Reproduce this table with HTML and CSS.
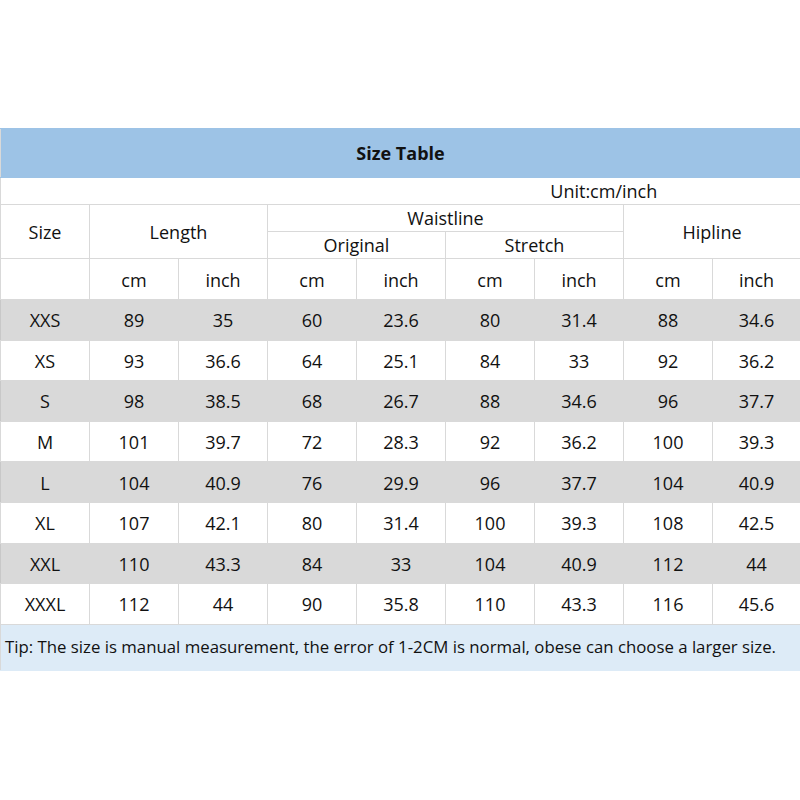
FILE: index.html
```html
<!DOCTYPE html>
<html>
<head>
<meta charset="utf-8">
<link rel="stylesheet" href="styles.css">
</head>
<body>
<table class="size-table">
  <colgroup>
    <col class="c"><col class="c"><col class="c"><col class="c"><col class="c"><col class="c"><col class="c"><col class="c"><col class="c-last">
  </colgroup>
  <tr class="title-row"><td colspan="9">Size Table</td></tr>
  <tr class="unit-row"><td colspan="9">Unit:cm/inch</td></tr>
  <tr class="head-row">
    <td rowspan="2">Size</td>
    <td colspan="2" rowspan="2">Length</td>
    <td colspan="4" class="waist">Waistline</td>
    <td colspan="2" rowspan="2">Hipline</td>
  </tr>
  <tr class="head-row sub">
    <td colspan="2" class="subhead">Original</td>
    <td colspan="2" class="subhead">Stretch</td>
  </tr>
  <tr class="units-row">
    <td></td><td>cm</td><td>inch</td><td>cm</td><td>inch</td><td>cm</td><td>inch</td><td>cm</td><td>inch</td>
  </tr>
  <tr class="data grey"><td>XXS</td><td>89</td><td>35</td><td>60</td><td>23.6</td><td>80</td><td>31.4</td><td>88</td><td>34.6</td></tr>
  <tr class="data"><td>XS</td><td>93</td><td>36.6</td><td>64</td><td>25.1</td><td>84</td><td>33</td><td>92</td><td>36.2</td></tr>
  <tr class="data grey"><td>S</td><td>98</td><td>38.5</td><td>68</td><td>26.7</td><td>88</td><td>34.6</td><td>96</td><td>37.7</td></tr>
  <tr class="data"><td>M</td><td>101</td><td>39.7</td><td>72</td><td>28.3</td><td>92</td><td>36.2</td><td>100</td><td>39.3</td></tr>
  <tr class="data grey"><td>L</td><td>104</td><td>40.9</td><td>76</td><td>29.9</td><td>96</td><td>37.7</td><td>104</td><td>40.9</td></tr>
  <tr class="data"><td>XL</td><td>107</td><td>42.1</td><td>80</td><td>31.4</td><td>100</td><td>39.3</td><td>108</td><td>42.5</td></tr>
  <tr class="data grey"><td>XXL</td><td>110</td><td>43.3</td><td>84</td><td>33</td><td>104</td><td>40.9</td><td>112</td><td>44</td></tr>
  <tr class="data"><td>XXXL</td><td>112</td><td>44</td><td>90</td><td>35.8</td><td>110</td><td>43.3</td><td>116</td><td>45.6</td></tr>
  <tr class="tip-row"><td colspan="9">Tip: The size is manual measurement, the error of 1-2CM is normal, obese can choose a larger size.</td></tr>
</table>
</body>
</html>
```

FILE: styles.css
```css
html, body {
  margin: 0;
  padding: 0;
  background: #ffffff;
}
body {
  padding-top: 128px;
  font-family: "Open Sans", "Noto Sans", sans-serif;
  color: #111111;
}
.size-table {
  width: 800px;
  table-layout: fixed;
  border-collapse: collapse;
  font-size: 18px;
}
.c { width: 89px; }
.c-last { width: 88px; }
.size-table td {
  border: 1px solid #d9d9d9;
  text-align: center;
  vertical-align: middle;
  padding: 0;
  line-height: 1;
  white-space: nowrap;
}
.title-row td {
  height: 48px;
  background: #9dc3e6;
  font-weight: 700;
  border-color: #9dc3e6;
  border-left-color: #d9d9d9;
}
.unit-row td {
  height: 26px;
  padding-left: 406px;
  border-top: none;
  border-right: none;
}
.head-row td {
  height: 26px;
}
.units-row td {
  height: 38px;
  padding-top: 2px;
}
.data td {
  height: 38.6px;
  padding-top: 1px;
}
.grey td {
  background: #d9d9d9;
  border-color: #d9d9d9;
}
.grey td:first-child {
  border-left-color: #c8c8c8;
}
.tip-row td {
  height: 45px;
  background: #ddebf7;
  border-color: #ddebf7;
  border-left-color: #d9d9d9;
  text-align: left;
  padding-left: 4px;
  font-size: 16.8px;
}
```
